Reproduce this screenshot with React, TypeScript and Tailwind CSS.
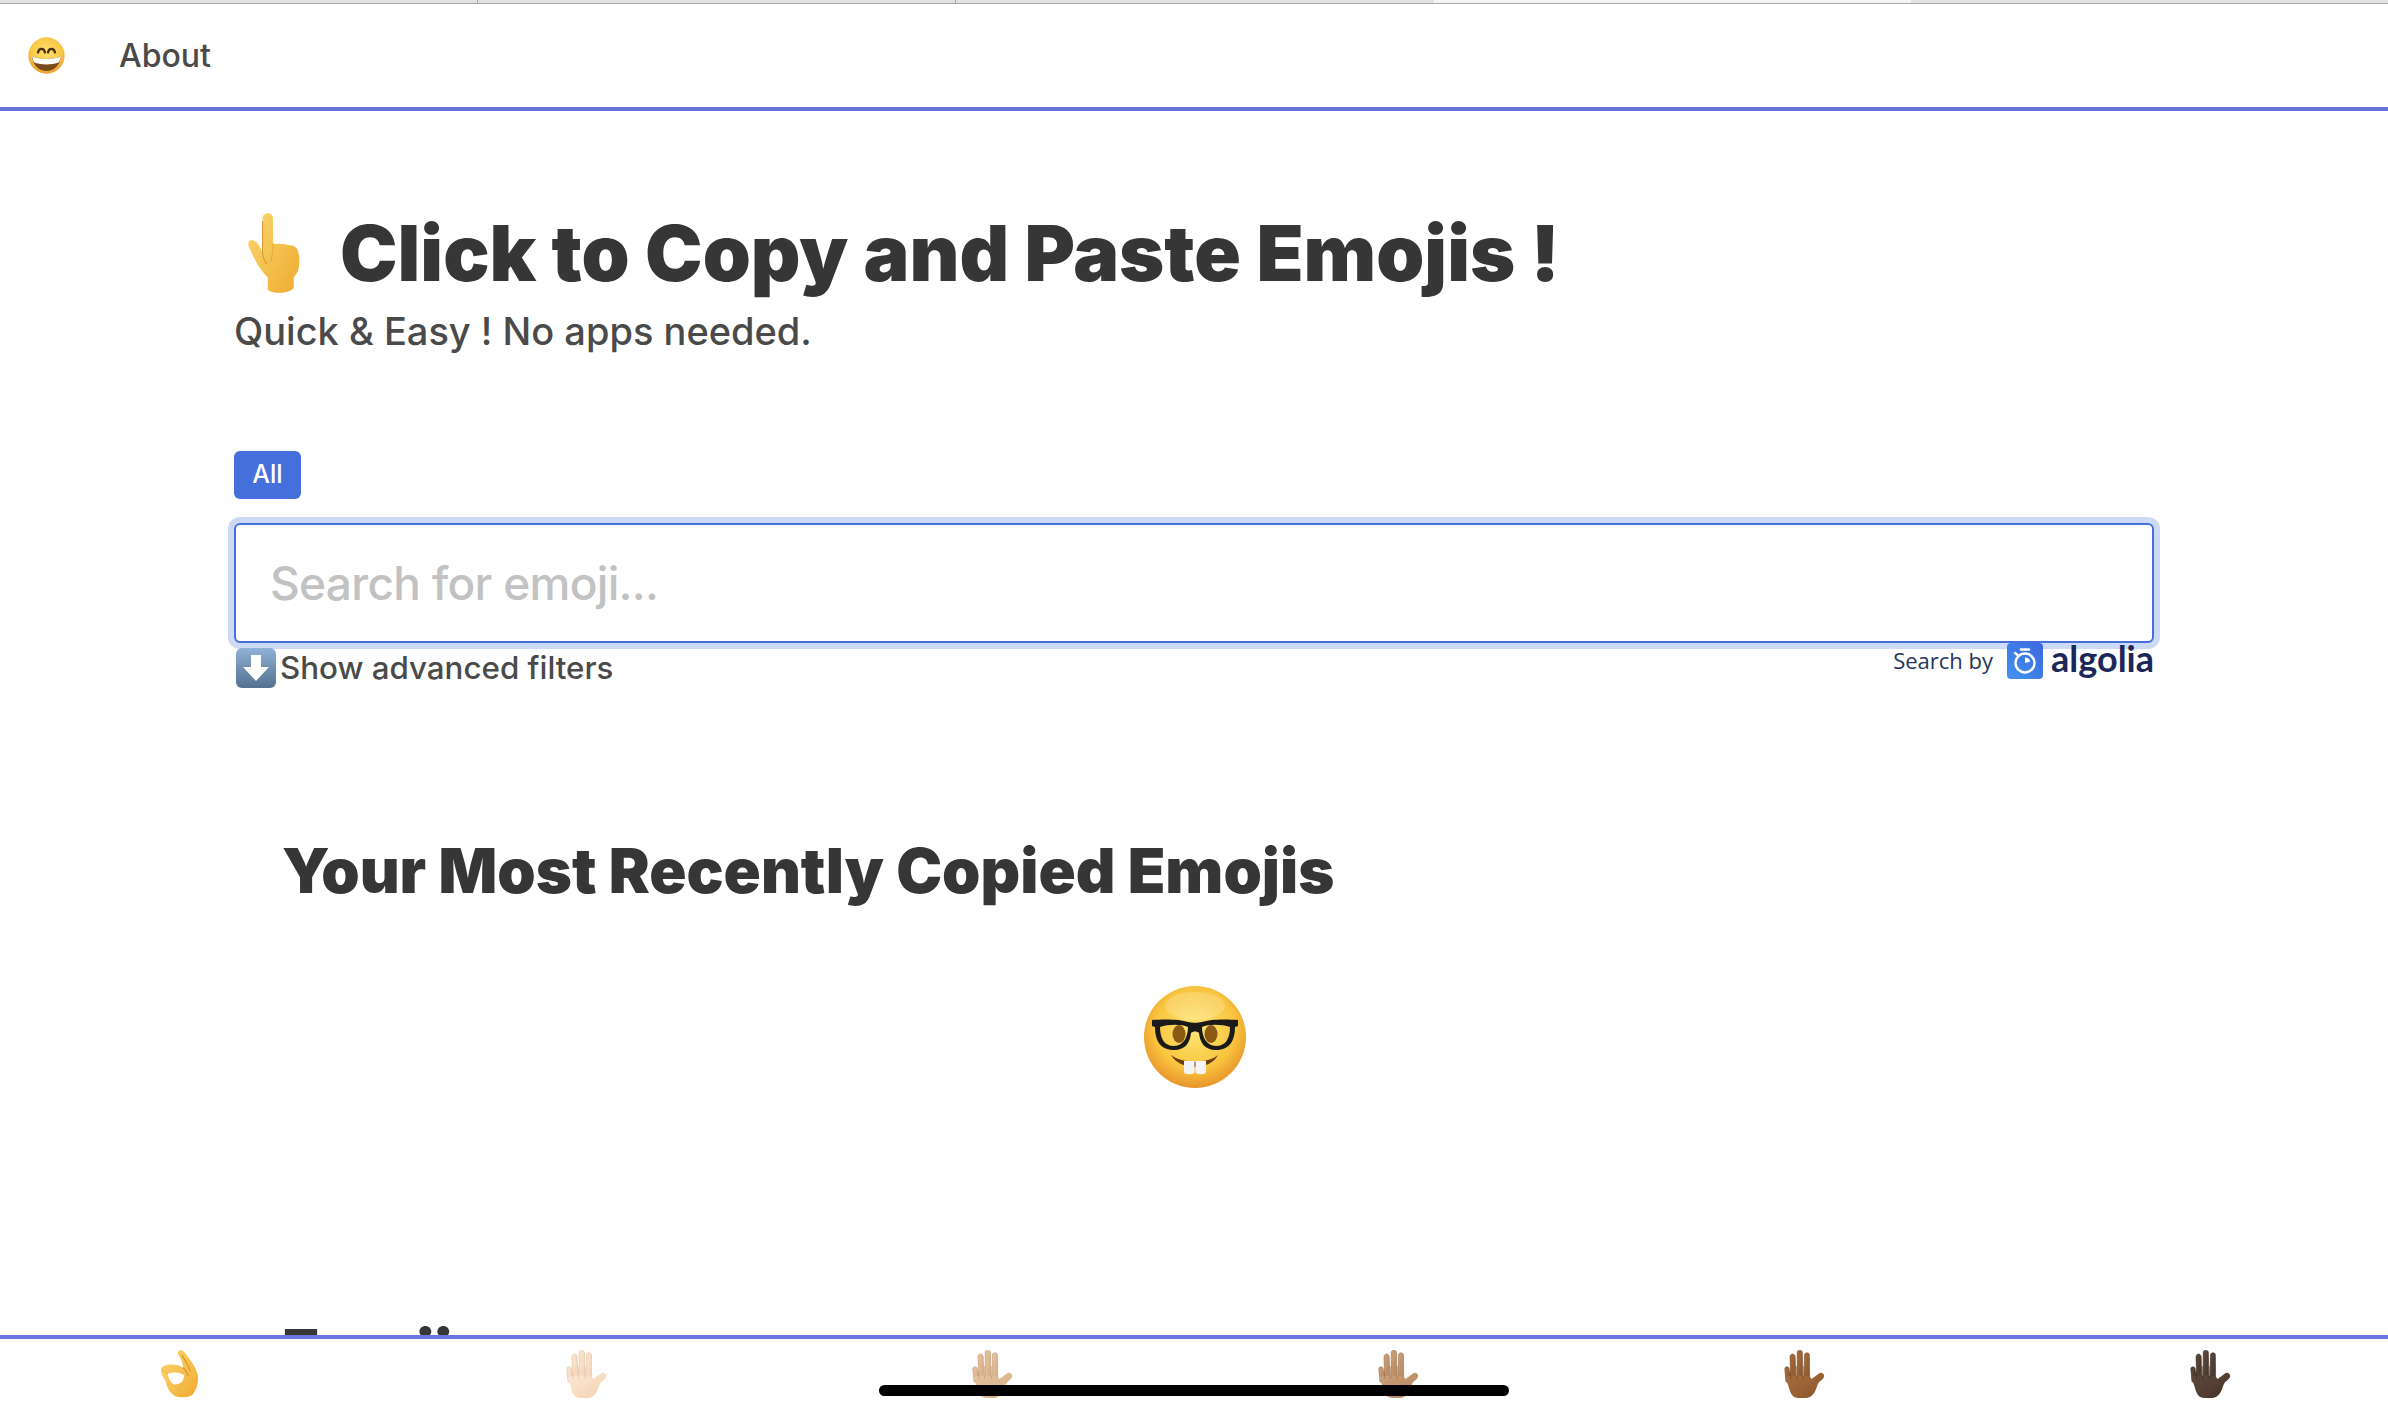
import React from "react";

function Hand({ id, light, mid, dark }: { id: string; light: string; mid: string; dark: string }) {
  return (
    <svg width="42" height="48" viewBox="0 0 42 48">
      <defs>
        <linearGradient id={id} x1="0" y1="0" x2="1" y2="1">
          <stop offset="0" stopColor={light} />
          <stop offset="1" stopColor={mid} />
        </linearGradient>
      </defs>
      <g fill={`url(#${id})`} stroke={dark} strokeWidth="0.5">
        <path d="M0.8 19 C0.8 16 5 16 5.2 19 L7 30 L2 32 Z" />
        <path d="M6 7 C6 3 11 3 11.2 7 L11.8 28 L6.6 28 Z" />
        <path d="M13.2 2.5 C13.2 -0.6 18.2 -0.6 18.4 2.5 L18.8 28 L13.2 28 Z" />
        <path d="M20.4 5 C20.6 2 25.4 2 25.4 5 L25.6 28 L20 28 Z" />
        <path d="M1.4 27 C4 25 24 25 26 27 L27.5 29 L35 23.5 C37 21.5 41 24 40 27 C39 29.5 36 31 34.5 33 C32 37 31.5 48 21 48 L14.5 48 C9 48 6.5 44 5 38 C3.5 33 2 30 1.4 27 Z" stroke="none" />
      </g>
      <path d="M6.4 22 L7 29 M12.4 16 L12.6 29 M19.2 16 L19.3 29" stroke={dark} strokeWidth="0.7" fill="none" opacity="0.7" />
    </svg>
  );
}

function OkHand() {
  return (
    <svg width="39" height="48" viewBox="0 0 37 46">
      <defs>
        <linearGradient id="ok" x1="0" y1="0" x2="1" y2="1">
          <stop offset="0" stopColor="#fbd870" />
          <stop offset="1" stopColor="#f0aa30" />
        </linearGradient>
      </defs>
      <path d="M17 2 C19 -1 22 0 24 3 C29 9 34 16 36 24 C37 31 35 38 31 43 C27 46 18 46 14 44 C9 41 6 35 5 29 C2 25 0 21 1 18 C2 15 6 14 11 14 C15 14 19 15 22 17 C22 12 19 7 17 4 Z" fill="url(#ok)" />
      <path d="M7 23 C11 21 18 21 23 24 C23 30 18 34 13 33 C10 31 8 27 7 23 Z" fill="#fff" />
      <path d="M7 23 C5 21 3 20 2 18" stroke="#e3a233" strokeWidth="0.8" fill="none" />
      <path d="M22 17 C25 20 26 22 27 25 M21 5 C24 10 27 15 29 21" stroke="#d48f25" strokeWidth="1" fill="none" />
    </svg>
  );
}

function PointUp() {
  return (
    <svg width="52" height="80" viewBox="0 0 50 77" className="shrink-0">
      <defs>
        <linearGradient id="pu" x1="0" y1="0" x2="1" y2="1">
          <stop offset="0" stopColor="#fbd76e" />
          <stop offset="1" stopColor="#edab30" />
        </linearGradient>
      </defs>
      <path d="M14 5 C14 -1.5 24 -1.5 24 5 L24 29 C27 31 29 29 31 30 C35 29 38 31 40 31 C44 31 47 33 48 36 C50 42 50 50 48 56 L44 62 L44 72 C40 78 24 78 19 74 L19 62 C12 55 6 45 2 35 C-1 30 0 26 4 26 C9 27 12 33 14 39 Z" fill="url(#pu)" />
      <path d="M14 8 L14 39 C15 44 16 47 18 49" stroke="#d9962c" strokeWidth="1" fill="none" />
      <path d="M24 29 C24 36 23 42 22 47" stroke="#e2a437" strokeWidth="0.8" fill="none" />
    </svg>
  );
}

function Grin() {
  return (
    <svg width="37" height="37" viewBox="0 0 100 100">
      <defs>
        <radialGradient id="gr" cx="0.5" cy="0.4" r="0.62">
          <stop offset="0" stopColor="#fde16c" />
          <stop offset="0.7" stopColor="#f9c544" />
          <stop offset="1" stopColor="#e8962a" />
        </radialGradient>
      </defs>
      <circle cx="50" cy="50" r="49" fill="url(#gr)" />
      <path d="M27 42 C30 29 43 29 46 42 M54 42 C57 29 70 29 73 42" stroke="#4b2f12" strokeWidth="6" fill="none" strokeLinecap="round" />
      <path d="M11 52 C30 62 70 62 89 52 C88 76 70 92 50 92 C30 92 12 76 11 52 Z" fill="#7a4a1b" />
      <path d="M11 52 C30 62 70 62 89 52 C88 60 86 65 83 69 C65 76 35 76 17 69 C14 65 12 60 11 52 Z" fill="#fff" />
    </svg>
  );
}

function Nerd() {
  return (
    <svg width="102" height="102" viewBox="0 0 102 102">
      <defs>
        <radialGradient id="nd" cx="0.5" cy="0.42" r="0.6">
          <stop offset="0" stopColor="#fde675" />
          <stop offset="0.65" stopColor="#f9c53f" />
          <stop offset="1" stopColor="#e58f28" />
        </radialGradient>
      </defs>
      <circle cx="51" cy="51" r="51" fill="url(#nd)" />
      <ellipse cx="51" cy="20" rx="30" ry="14" fill="#fff" opacity="0.18" />
      <ellipse cx="35" cy="48" rx="6.5" ry="9" fill="#8a5a14" />
      <ellipse cx="67" cy="48" rx="6.5" ry="9" fill="#8a5a14" />
      <path d="M8 34 C20 33 36 33 44 36 C48 37 54 37 58 36 C66 33 82 33 94 34 L94 40 L91 41 C91 54 86 64 72 64 C60 64 56 56 55 47 C53 45 49 45 47 47 C46 56 42 64 30 64 C16 64 11 54 11 41 L8 40 Z M16 41 C16 52 20 60 30 60 C40 60 44 50 44 41 C38 38 24 38 16 41 Z M58 41 C58 50 62 60 72 60 C82 60 86 52 86 41 C78 38 64 38 58 41 Z" fill="#1a1a1a" fillRule="evenodd" />
      <path d="M27 69 C38 78 64 78 74 69 C66 85 36 85 27 69 Z" fill="#6b3d10" />
      <path d="M40 75 L50.5 75 L50.5 86 C50.5 89 40 89 40 86 Z M51.5 75 L62 75 L62 86 C62 89 51.5 89 51.5 86 Z" fill="#f4f4f4" />
    </svg>
  );
}

function ArrowDown() {
  return (
    <svg width="40" height="40" viewBox="0 0 40 40" className="shrink-0">
      <defs>
        <linearGradient id="ad" x1="0" y1="0" x2="0" y2="1">
          <stop offset="0" stopColor="#90b2d6" />
          <stop offset="1" stopColor="#53708f" />
        </linearGradient>
      </defs>
      <rect width="40" height="40" rx="6" fill="url(#ad)" />
      <path d="M15 7 H25 V19 H33 L20 33 L7 19 H15 Z" fill="#fff" />
    </svg>
  );
}

function Stopwatch() {
  return (
    <svg width="36" height="36" viewBox="0 0 36 36">
      <defs>
        <linearGradient id="al" x1="1" y1="0" x2="0" y2="1">
          <stop offset="0" stopColor="#3b68dc" />
          <stop offset="1" stopColor="#4193f0" />
        </linearGradient>
      </defs>
      <rect width="36" height="36" rx="4" fill="url(#al)" />
      <circle cx="18" cy="20" r="9.5" fill="none" stroke="#fff" strokeWidth="2.4" />
      <path d="M14 6.5 H22" stroke="#fff" strokeWidth="2.4" strokeLinecap="round" />
      <path d="M8 10 L10.5 12" stroke="#fff" strokeWidth="2.4" strokeLinecap="round" />
      <path d="M18 20 V14.5 A5.5 5.5 0 0 1 23.3 18.5 Z" fill="#fff" />
    </svg>
  );
}

export default function App() {
  return (
    <div className="flex h-[1411px] w-full flex-col overflow-hidden bg-white font-['Inter',sans-serif]">
      <div className="flex h-[4px] shrink-0 border-b border-[#a9a9a9] bg-[#e1e1e1]">
        <div className="flex-1 border-r border-[#a9a9a9]" />
        <div className="flex-1 border-r border-[#a9a9a9]" />
        <div className="flex-1" />
        <div className="flex-1 bg-[#f5f5f5]" />
        <div className="flex-1" />
      </div>
      <nav className="flex h-[107px] shrink-0 items-center border-b-4 border-[#6875dd] pl-[28px]">
        <Grin />
        <a className="ml-[54px] text-[32px] font-medium text-[#4a4a4a]">About</a>
      </nav>
      <main className="min-h-0 flex-1 overflow-hidden px-[234px]">
        <h1 className="mt-[102px] flex h-[80px] items-center pl-[14px] text-[77px] font-black leading-none text-[#363636]">
          <PointUp />
          <span className="ml-[40px] whitespace-nowrap">Click to Copy and Paste Emojis !</span>
        </h1>
        <p className="mt-[15px] text-[38px] font-medium leading-[46px] text-[#4a4a4a]">Quick &amp; Easy ! No apps needed.</p>
        <button className="mt-[97px] block h-[48px] w-[67px] rounded-[6px] bg-[#4570db] text-[25px] font-medium text-white">All</button>
        <input
          readOnly
          placeholder="Search for emoji..."
          className="mt-[24px] block h-[120px] w-full rounded-[6px] border-2 border-[#4570db] bg-white px-[34px] text-[46px] font-medium tracking-[-0.015em] text-[#363636] shadow-[0_0_0_6px_#cddaf5] outline-none placeholder:text-[#c2c2c2]"
        />
        <div className="mt-[5px] flex items-start justify-between">
          <div className="flex items-center pl-[2px]">
            <ArrowDown />
            <span className="ml-[4px] text-[31.3px] font-medium leading-[40px] text-[#4a4a4a]">Show advanced filters</span>
          </div>
          <div className="-mt-[8px] flex items-center">
            <span className="font-['Open_Sans',sans-serif] text-[22px] text-[#24365e]">Search by</span>
            <span className="ml-[14px] flex"><Stopwatch /></span>
            <span className="mb-[5px] ml-[8px] font-['Lato',sans-serif] text-[36px] font-bold leading-[36px] text-[#1c2759]">algolia</span>
          </div>
        </div>
        <h2 className="mt-[147px] whitespace-nowrap pl-[48px] text-[61.5px] font-black leading-[72px] text-[#363636]">Your Most Recently Copied Emojis</h2>
        <div className="ml-[1px] mt-[79px] flex h-[102px] justify-center">
          <Nerd />
        </div>
        <h2 className="mt-[228px] pl-[48px] text-[61.5px] font-black leading-[72px] text-[#363636]">Emojis</h2>
      </main>
      <footer className="relative flex h-[76px] shrink-0 items-start justify-between border-t-4 border-[#6875dd] bg-[#fefefe] pl-[160px] pr-[156px] pt-[11px]">
        <div className="w-[42px]"><OkHand /></div>
        <Hand id="h1" light="#fbe7d3" mid="#f3d3b4" dark="#dcb592" />
        <Hand id="h2" light="#e7c6a2" mid="#d4ab82" dark="#b48a62" />
        <Hand id="h3" light="#cda27a" mid="#b5845a" dark="#8f6340" />
        <Hand id="h4" light="#a86f3f" mid="#8a5529" dark="#6a3d1b" />
        <Hand id="h5" light="#5f4a3d" mid="#463328" dark="#2e211a" />
        <div className="absolute left-[879px] top-[46px] h-[11px] w-[630px] rounded-full bg-black" />
      </footer>
    </div>
  );
}
